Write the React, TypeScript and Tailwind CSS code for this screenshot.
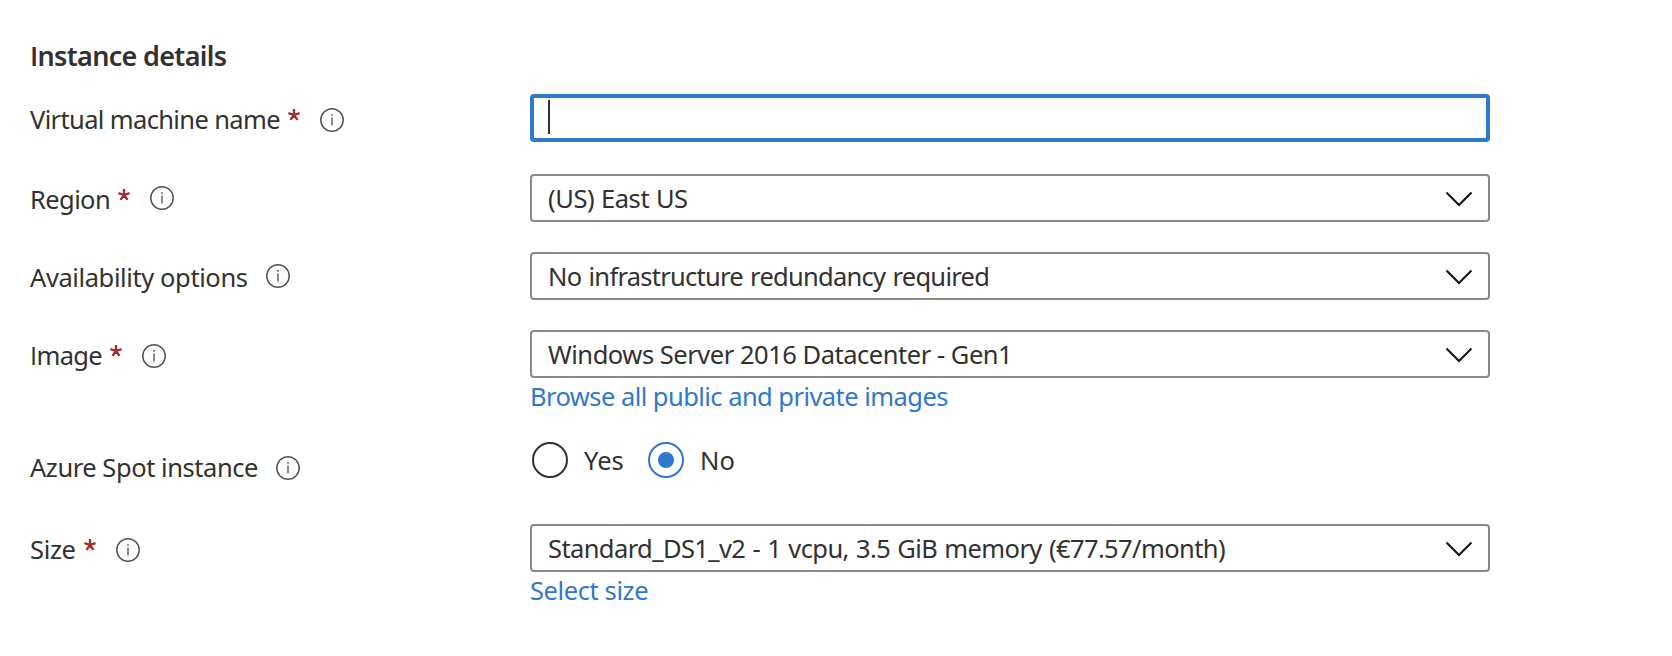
import { useState } from "react";
import type { ReactNode } from "react";

function InfoIcon({ className }: { className: string }) {
  return (
    <svg viewBox="0 0 24 24" className={`size-6 shrink-0 ${className}`} fill="none" aria-hidden="true">
      <circle cx="12" cy="12" r="11.2" stroke="#555453" strokeWidth="1.5" />
      <path d="M12 9.4V17.4" stroke="#706e6c" strokeWidth="1.6" />
      <circle cx="12" cy="7" r="1" fill="#706e6c" />
    </svg>
  );
}

function Chevron() {
  return (
    <svg viewBox="0 0 28 16" className="relative top-px mr-[15px] h-4 w-7 shrink-0" fill="none" aria-hidden="true">
      <path d="M1.5 1.5L14 14L26.5 1.5" stroke="#111" strokeWidth="2" />
    </svg>
  );
}

interface FieldProps {
  text: ReactNode;
  textClass: string;
  iconClass: string;
  rowClass: string;
  required?: boolean;
  children: ReactNode;
}

function Field({ text, textClass, iconClass, rowClass, required, children }: FieldProps) {
  return (
    <div className={`flex items-start ${rowClass}`}>
      <div className="flex h-12 w-[500px] shrink-0 items-center">
        <span className={`relative top-px shrink-0 whitespace-nowrap ${textClass}`}>{text}</span>
        {required && (
          <svg viewBox="0 0 12 12" className="relative -top-[3px] ml-2 size-3 shrink-0" fill="none" aria-label="required">
            <path d="M6 6V0M6 6L0.4 4.2M6 6L11.6 4.2M6 6L2.5 10.9M6 6L9.5 10.9" stroke="#9f2b2f" strokeWidth="2.3" />
          </svg>
        )}
        <InfoIcon className={iconClass} />
      </div>
      <div className="w-[960px] shrink-0">{children}</div>
    </div>
  );
}

function Dropdown({ value, className }: { value: string; className: string }) {
  return (
    <button type="button" className="flex h-12 w-full items-center justify-between rounded-[4px] border-2 border-[#8a8886] bg-white pl-4 text-left">
      <span className={`whitespace-nowrap ${className}`}>{value}</span>
      <Chevron />
    </button>
  );
}

function Link({ children, className }: { children: string; className: string }) {
  return (
    <a href="#" className={`mt-[3px] block h-[30px] w-max leading-[30px] whitespace-nowrap text-[#2f78d0] ${className}`}>
      {children}
    </a>
  );
}

function Radio({ label, checked, onSelect, className }: { label: string; checked: boolean; onSelect: () => void; className: string }) {
  return (
    <button type="button" role="radio" aria-checked={checked} onClick={onSelect} className={`flex h-9 items-center ${className}`}>
      <span className={`flex size-9 items-center justify-center rounded-full border-2 ${checked ? "border-[#2f78d0]" : "border-[#323130]"}`}>
        {checked && <span className="size-4 rounded-full bg-[#2f78d0]" />}
      </span>
      <span className="ml-4">{label}</span>
    </button>
  );
}

export default function App() {
  const [spot, setSpot] = useState(false);
  return (
    <main className="h-[656px] w-[1672px] overflow-hidden bg-white pl-[30px] font-['Noto_Sans','Open_Sans',sans-serif] text-[25.5px] text-[#323130]">
      <h2 className="mt-[38px] h-9 w-max text-[27px] leading-9 font-semibold tracking-[-0.68px] whitespace-nowrap">
        <span className="font-['Open_Sans']">I</span>nstance details
      </h2>
      <Field text="Virtual machine name" textClass="tracking-[-0.64px]" required iconClass="ml-5 mt-1" rowClass="mt-5">
        <div className="flex h-12 items-start rounded-[4px] border-4 border-[#2f78d0] pt-0.5 pl-[14px]">
          <span className="h-[34px] w-0.5 bg-[#323130]" />
        </div>
      </Field>
      <Field text="Region" textClass="tracking-[-0.6px]" required iconClass="ml-5" rowClass="mt-8">
        <Dropdown value="(US) East US" className="tracking-[-0.42px] [word-spacing:0.5px]" />
      </Field>
      <Field text="Availability options" textClass="tracking-[-0.4px]" iconClass="ml-[18px]" rowClass="mt-[30px]">
        <Dropdown value="No infrastructure redundancy required" className="tracking-[-0.74px] [word-spacing:1.3px]" />
      </Field>
      <Field text={<><span className="font-['Open_Sans']">I</span>mage</>} textClass="tracking-[-0.65px]" required iconClass="ml-5 mt-1" rowClass="mt-[30px]">
        <Dropdown value="Windows Server 2016 Datacenter - Gen1" className="tracking-[-0.47px]" />
        <Link className="tracking-[-0.55px]">Browse all public and private images</Link>
      </Field>
      <Field text="Azure Spot instance" textClass="tracking-[-0.45px]" iconClass="ml-[18px] mt-1" rowClass="mt-[31px]">
        <div role="radiogroup" className="flex pl-0.5">
          <Radio label="Yes" checked={spot} onSelect={() => setSpot(true)} className="w-[116px]" />
          <Radio label="No" checked={!spot} onSelect={() => setSpot(false)} className="" />
        </div>
      </Field>
      <Field text="Size" textClass="tracking-[-0.33px]" required iconClass="ml-5 mt-1" rowClass="mt-[34px]">
        <Dropdown value="Standard_DS1_v2 - 1 vcpu, 3.5 GiB memory (€77.57/month)" className="tracking-[-0.6px] [word-spacing:1.1px]" />
        <Link className="tracking-[-0.4px]">Select size</Link>
      </Field>
    </main>
  );
}
